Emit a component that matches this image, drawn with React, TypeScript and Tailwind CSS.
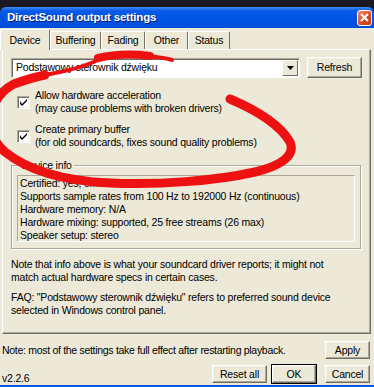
import React from 'react'

const Check = () => (
    <span className="w-[13px] h-[13px] shrink-0 bg-white border border-t-[#ACA899] border-l-[#ACA899] border-b-white border-r-white shadow-[inset_1px_1px_#716F64,inset_-1px_-1px_#F1EFE2] flex items-center justify-center">
        <svg width="7" height="7" viewBox="0 0 7 7">
            <path d="M0 2v3l2 2l5-5v-2l-5 5z" fill="#000" />
        </svg>
    </span>
)

const Btn = ({ label, className = '', def = false }: { label: string, className?: string, def?: boolean }) => (
    <div className={`${def ? 'outline outline-1 outline-black' : ''} ${className}`}>
        <div className="h-full w-full flex items-center justify-center border border-t-white border-l-white border-b-[#716F64] border-r-[#716F64] shadow-[inset_-1px_-1px_#ACA899,inset_1px_1px_#F1EFE2] bg-[#ECE9D8]">
            {label}
        </div>
    </div>
)

const Tab = ({ label, w, active = false }: { label: string, w: string, active?: boolean }) => (
    <div className={`${w} flex items-center justify-center border-l border-t border-t-white border-l-white border-r border-r-[#716F64] rounded-t-[2px] ${active ? 'h-[21px] -mb-[1px] bg-[#ECE9D8] z-10 relative' : 'h-[18px] mb-0'}`}>
        {label}
    </div>
)

const App = () => {
    return (
        <div className="w-[374px] h-[387px] bg-[#1b1a24] relative overflow-hidden text-[10.5px] tracking-[-0.2px] leading-[13px] text-black font-['Liberation_Sans',Arial,sans-serif]">
            <div className="mt-[7px] h-[380px] flex flex-col">
                {/* title bar */}
                <div className="h-[21px] rounded-t-[6px] bg-[linear-gradient(#3d8cf7_0%,#0a5ae8_18%,#0055e5_50%,#004fd8_100%)] flex items-center justify-between pl-[7px] pr-[2px]">
                    <span className="text-white font-bold text-[11.5px] tracking-[-0.2px] [text-shadow:1px_1px_#0a1f6b]">DirectSound output settings</span>
                    <div className="w-[15px] h-[16px] rounded-[3px] border border-white bg-[linear-gradient(135deg,#f08c6c,#d9491f_60%,#c43b12)] flex items-center justify-center">
                        <svg width="9" height="9" viewBox="0 0 9 9">
                            <path d="M1 1l7 7M8 1l-7 7" stroke="#fff" strokeWidth="2" />
                        </svg>
                    </div>
                </div>

                <div className="flex-1 flex bg-[#0055e5]">
                    <div className="w-[3px]" />
                    <div className="flex-1 bg-[#ECE9D8] flex flex-col mb-[2px]">
                        {/* tabs */}
                        <div className="h-[21px] flex items-end">
                            <Tab label="Device" w="w-[50px]" active />
                            <Tab label="Buffering" w="w-[51px]" />
                            <Tab label="Fading" w="w-[44px]" />
                            <Tab label="Other" w="w-[43px]" />
                            <Tab label="Status" w="w-[42px]" />
                        </div>

                        {/* panel */}
                        <div className="ml-[2px] mr-[3px] h-[285px] border border-t-white border-l-white border-b-[#716F64] border-r-[#716F64] shadow-[inset_-1px_-1px_#ACA899] px-[8px]">
                            <div className="flex items-center gap-[7px] mt-[7px]">
                                <div className="w-[289px] h-[20px] bg-white border border-t-[#ACA899] border-l-[#ACA899] border-b-white border-r-white shadow-[inset_1px_1px_#716F64] flex items-center justify-between pl-[4px] pr-[1px]">
                                    <span>Podstawowy sterownik dźwięku</span>
                                    <div className="w-[16px] h-[16px] border border-t-white border-l-white border-b-[#716F64] border-r-[#716F64] bg-[#ECE9D8] flex items-center justify-center">
                                        <svg width="7" height="4" viewBox="0 0 7 4"><path d="M0 0h7l-3.5 4z" fill="#000" /></svg>
                                    </div>
                                </div>
                                <Btn label="Refresh" className="w-[55px] h-[21px]" />
                            </div>

                            <div className="flex items-center gap-[5px] mt-[11px] pl-[6px]">
                                <Check />
                                <div>
                                    <div>Allow hardware acceleration</div>
                                    <div>(may cause problems with broken drivers)</div>
                                </div>
                            </div>
                            <div className="flex items-center gap-[5px] mt-[8px] pl-[6px]">
                                <Check />
                                <div>
                                    <div>Create primary buffer</div>
                                    <div>(for old soundcards, fixes sound quality problems)</div>
                                </div>
                            </div>

                            <fieldset className="mt-[10px] border border-[#ACA899] shadow-[1px_1px_white,inset_1px_1px_white] px-[5px] pb-[6px] pt-0 w-[350px]">
                                <legend className="ml-[3px] px-[2px]">Device info</legend>
                                <div className="mt-[3px] h-[67px] border border-t-[#ACA899] border-l-[#ACA899] border-b-white border-r-white px-[2px] pt-[1px]">
                                    <div>Certified: yes, emulated: no</div>
                                    <div>Supports sample rates from 100 Hz to 192000 Hz (continuous)</div>
                                    <div>Hardware memory: N/A</div>
                                    <div>Hardware mixing: supported, 25 free streams (26 max)</div>
                                    <div>Speaker setup: stereo</div>
                                </div>
                            </fieldset>

                            <p className="mt-[9px]">Note that info above is what your soundcard driver reports; it might not<br />match actual hardware specs in certain cases.</p>
                            <p className="mt-[7px]">FAQ: "Podstawowy sterownik dźwięku" refers to preferred sound device<br />selected in Windows control panel.</p>
                        </div>

                        {/* bottom */}
                        <div className="flex items-center justify-between pl-[2px] pr-[4px] mt-[7px]">
                            <span className="tracking-[-0.3px]">Note: most of the settings take full effect after restarting playback.</span>
                            <Btn label="Apply" className="w-[45px] h-[18px]" />
                        </div>
                        <div className="flex items-end justify-between pl-[2px] pr-[4px] mt-[6px]">
                            <span className="mb-[-2px]">v2.2.6</span>
                            <div className="flex">
                                <Btn label="Reset all" className="w-[55px] h-[18px] mr-[5px]" />
                                <Btn label="OK" className="w-[44px] h-[18px] mr-[9px]" def />
                                <Btn label="Cancel" className="w-[45px] h-[18px]" />
                            </div>
                        </div>
                    </div>
                    <div className="w-[3px]" />
                </div>
            </div>

            {/* red marker loop drawn over the dialog */}
            <svg className="absolute inset-0 pointer-events-none" width="374" height="387" viewBox="0 0 374 387">
                <path d="M230 99 C256 110 280 125 290 142 C296 156 280 166 255 172 C215 181 160 185 110 183 C65 181 30 172 5 152 C-20 130 -10 96 14 84 C25 80 35 77 45 75"
                    fill="none" stroke="#ee1111" strokeWidth="9" strokeLinecap="round" />
                <path d="M44 75 C62 72 82 68 98 60"
                    fill="none" stroke="#ee1111" strokeWidth="4" strokeLinecap="round" />
                <path d="M98 58 C115 54 135 54 150 56"
                    fill="none" stroke="#ee1111" strokeWidth="8" strokeLinecap="round" />
                <path d="M148 56 C158 57 166 58 172 60"
                    fill="none" stroke="#ee1111" strokeWidth="4" strokeLinecap="round" />
            </svg>
        </div>
    )
}

export default App
